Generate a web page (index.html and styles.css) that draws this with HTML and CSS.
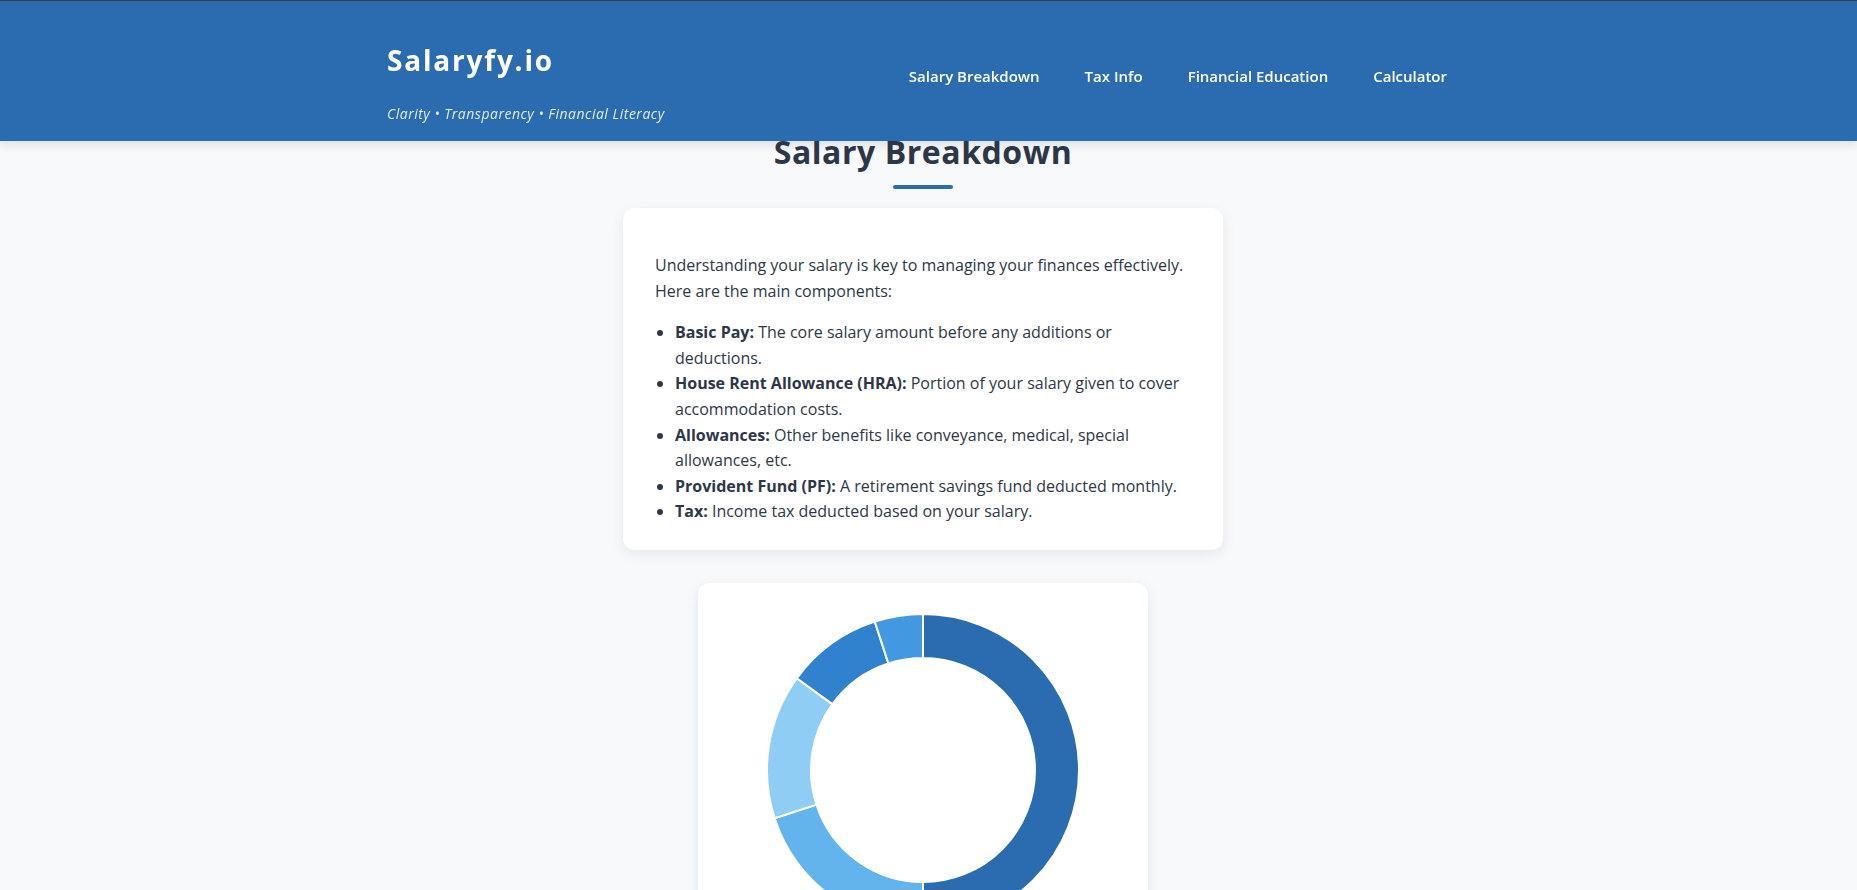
FILE: index.html
```html
<!DOCTYPE html>
<html lang="en">
<head>
<meta charset="utf-8">
<title>Salaryfy.io – Salary Breakdown</title>
<link rel="stylesheet" href="styles.css">
</head>
<body>
<header class="site-header">
  <div class="header-inner">
    <div class="brand">
      <h1 class="logo">Salaryfy.io</h1>
      <p class="tagline">Clarity • Transparency • Financial Literacy</p>
    </div>
    <nav class="nav">
      <a class="nav-link" href="#breakdown">Salary Breakdown</a>
      <a class="nav-link" href="#tax">Tax Info</a>
      <a class="nav-link" href="#education">Financial Education</a>
      <a class="nav-link" href="#calculator">Calculator</a>
    </nav>
  </div>
</header>

<main class="content" id="breakdown">
  <h2 class="section-title">Salary Breakdown</h2>
  <div class="title-bar"></div>

  <section class="card info-card">
    <p class="intro">Understanding your salary is key to managing your finances effectively. Here are the main components:</p>
    <ul class="components">
      <li><strong>Basic Pay:</strong> The core salary amount before any additions or deductions.</li>
      <li><strong>House Rent Allowance (HRA):</strong> Portion of your salary given to cover accommodation costs.</li>
      <li><strong>Allowances:</strong> Other benefits like conveyance, medical, special allowances, etc.</li>
      <li><strong>Provident Fund (PF):</strong> A retirement savings fund deducted monthly.</li>
      <li><strong>Tax:</strong> Income tax deducted based on your salary.</li>
    </ul>
  </section>

  <section class="card chart-card">
    <svg class="donut" width="316" height="316" viewBox="0 0 316 316" aria-label="Salary breakdown chart">
      <path class="seg seg-basic" d="M158 2 A156 156 0 0 1 158 314 L158 270 A112 112 0 0 0 158 46 Z"/>
      <path class="seg seg-hra" d="M158 314 A156 156 0 0 1 9.635 206.207 L51.481 192.61 A112 112 0 0 0 158 270 Z"/>
      <path class="seg seg-allow" d="M9.635 206.207 A156 156 0 0 1 31.793 66.305 L67.39 92.168 A112 112 0 0 0 51.481 192.61 Z"/>
      <path class="seg seg-pf" d="M31.793 66.305 A156 156 0 0 1 109.793 9.635 L123.39 51.481 A112 112 0 0 0 67.39 92.168 Z"/>
      <path class="seg seg-tax" d="M109.793 9.635 A156 156 0 0 1 158 2 L158 46 A112 112 0 0 0 123.39 51.481 Z"/>
    </svg>
  </section>
</main>
</body>
</html>
```

FILE: styles.css
```css
* {
  box-sizing: border-box;
}

html, body {
  margin: 0;
  padding: 0;
}

body {
  background: #f7f9fb;
  font-family: "Open Sans", Lato, "Liberation Sans", sans-serif;
  color: #2d3748;
  padding-right: 11px;
}

.site-header {
  position: fixed;
  top: 0;
  left: 0;
  right: 0;
  z-index: 10;
  background: #2b6cb0;
  border-top: 1px solid #3b3f45;
  box-shadow: 0 3px 10px rgba(30, 50, 80, 0.14);
  padding-right: 11px;
}

.header-inner {
  width: 1072px;
  margin: 0 auto;
  height: 140px;
  display: flex;
  justify-content: space-between;
  align-items: flex-start;
}

.brand {
  padding-top: 41px;
}

.logo {
  margin: 0;
  font-size: 28px;
  line-height: 36px;
  font-weight: 700;
  letter-spacing: 1.8px;
  color: #ffffff;
}

.tagline {
  margin: 26px 0 0;
  font-size: 14px;
  line-height: 20px;
  font-style: italic;
  letter-spacing: 0.5px;
  color: #e2ebf5;
}

.nav {
  display: flex;
  gap: 21px;
  padding-top: 56px;
}

.nav-link {
  display: block;
  padding: 8px 12px;
  font-size: 15px;
  line-height: 22px;
  font-weight: 600;
  color: #ffffff;
  text-decoration: none;
}

.content {
  width: 600px;
  margin: 0 auto;
  padding-top: 131px;
  display: flex;
  flex-direction: column;
  align-items: center;
}

.section-title {
  margin: 0;
  font-size: 32px;
  line-height: 42px;
  font-weight: 700;
  letter-spacing: 0.55px;
  color: #2d3748;
}

.title-bar {
  width: 60px;
  height: 4px;
  border-radius: 2px;
  background: #2b6cb0;
  margin-top: 12px;
}

.card {
  background: #ffffff;
  border-radius: 12px;
  box-shadow: 0 4px 14px rgba(30, 45, 70, 0.08);
}

.info-card {
  width: 600px;
  margin-top: 19px;
  padding: 45px 32px 25px;
  font-size: 16px;
  line-height: 25.6px;
}

.intro {
  margin: 0 0 16px;
}

.components {
  margin: 0;
  padding-left: 20px;
}

.components strong {
  font-weight: 700;
}

.chart-card {
  width: 450px;
  margin-top: 33px;
  padding: 29px 30px 60px;
  display: flex;
  justify-content: center;
}

.donut {
  display: block;
}

.seg {
  stroke: #ffffff;
  stroke-width: 2;
  stroke-linejoin: miter;
}

.seg-basic { fill: #2b6cb0; }
.seg-hra { fill: #63b3ed; }
.seg-allow { fill: #90cdf4; }
.seg-pf { fill: #3182ce; }
.seg-tax { fill: #4299e1; }
```
